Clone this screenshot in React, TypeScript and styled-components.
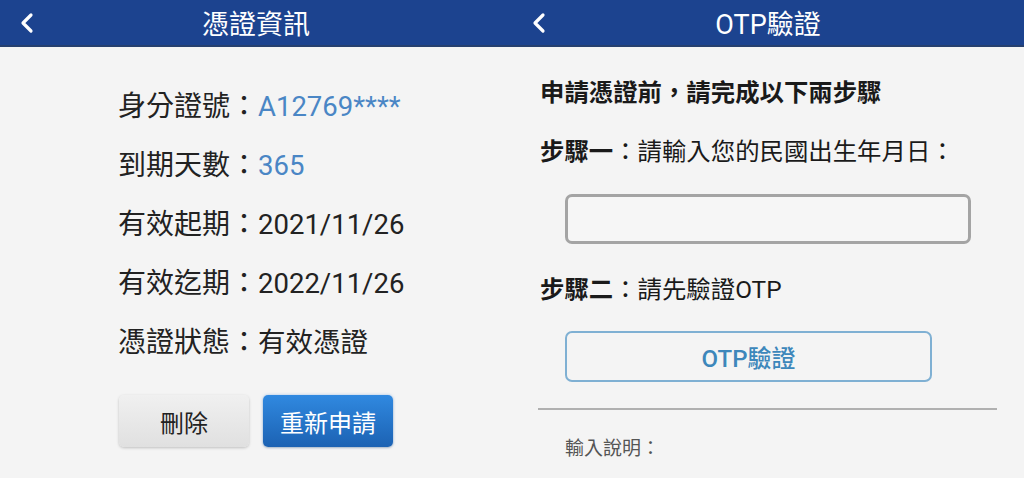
import React from "react";
import styled, { createGlobalStyle } from "styled-components";

const Global = createGlobalStyle`
  html, body { margin: 0; padding: 0; background: #f4f4f4; }
  body { font-family: Roboto, "Noto Sans CJK TC", sans-serif; }
`;

const Page = styled.div`
  display: flex;
  width: 1024px;
  height: 478px;
  overflow: hidden;
  background: #f4f4f4;
`;

const Panel = styled.div`
  width: 512px;
  display: flex;
  flex-direction: column;
`;

const Header = styled.div`
  height: 47px;
  box-sizing: border-box;
  background: #1c438f;
  border-bottom: 2px solid #26406f;
  display: flex;
  align-items: center;
  justify-content: center;
  position: relative;
  color: #fff;
  font-size: 27px;
  font-family: Roboto, "Noto Sans CJK TC", sans-serif;
`;

const Back = styled.svg`
  position: absolute;
  left: 18px;
  top: 11px;
`;

const InfoBody = styled.div`
  padding: 30px 0 0 118px;
  display: flex;
  flex-direction: column;
`;

const InfoRow = styled.div`
  height: 59px;
  line-height: 59px;
  font-size: 28px;
  color: #222;
  white-space: nowrap;
`;

const Value = styled.span<{ $blue?: boolean }>`
  color: ${(p) => (p.$blue ? "#4a86c5" : "#222")};
  font-size: 27.5px;
`;

const Buttons = styled.div`
  display: flex;
  gap: 14px;
  margin-top: 23px;
  margin-left: 1px;
`;

const Btn = styled.button<{ $primary?: boolean }>`
  width: 130px;
  height: 52px;
  border: none;
  border-radius: 5px;
  font-size: 24px;
  font-family: Roboto, "Noto Sans CJK TC", sans-serif;
  padding: 0;
  color: ${(p) => (p.$primary ? "#fff" : "#222")};
  background: ${(p) =>
    p.$primary
      ? "linear-gradient(#3089e0, #1c62b3)"
      : "linear-gradient(#f0f0f0, #e0e0e0)"};
  box-shadow: ${(p) =>
    p.$primary
      ? "0 0 3px rgba(80,150,230,0.5), 0 1px 2px rgba(0,0,0,0.2)"
      : "0 1px 3px rgba(0,0,0,0.22)"};
`;

const OtpBody = styled.div`
  padding: 26px 0 0 28px;
  display: flex;
  flex-direction: column;
`;

const Line = styled.div<{ $top: number; $bold?: boolean }>`
  margin-top: ${(p) => p.$top}px;
  height: 40px;
  line-height: 40px;
  font-size: 24.4px;
  color: #1a1a1a;
  font-weight: ${(p) => (p.$bold ? 700 : 400)};
  white-space: nowrap;
`;

const Strong = styled.b`
  font-weight: 700;
`;

const Input = styled.div`
  margin: 22px 0 0 25px;
  width: 406px;
  height: 50px;
  box-sizing: border-box;
  border: 3px solid #a4a4a4;
  border-radius: 7px;
  background: #f6f6f6;
`;

const OtpButton = styled.div`
  margin: 21px 0 0 25px;
  width: 367px;
  height: 51px;
  box-sizing: border-box;
  border: 2px solid #7fb0d3;
  border-radius: 7px;
  display: flex;
  align-items: center;
  justify-content: center;
  font-size: 24px;
  font-weight: 500;
  color: #3d87bb;
`;

const Divider = styled.div`
  margin: 26px 0 0 -2px;
  width: 459px;
  height: 2px;
  background: #b0b0b0;
`;

const Note = styled.div`
  margin: 24px 0 0 25px;
  height: 30px;
  line-height: 30px;
  font-size: 19px;
  color: #555;
`;

const Chevron = () => (
  <Back width="18" height="24" viewBox="0 0 18 24">
    <polyline
      points="13,4 5,12 13,20"
      fill="none"
      stroke="#fff"
      strokeWidth="3.2"
      strokeLinecap="round"
      strokeLinejoin="round"
    />
  </Back>
);

export default function App() {
  return (
    <>
      <Global />
      <Page>
        <Panel>
          <Header>
            <Chevron />
            憑證資訊
          </Header>
          <InfoBody>
            <InfoRow>
              身分證號：<Value $blue>A12769****</Value>
            </InfoRow>
            <InfoRow>
              到期天數：<Value $blue>365</Value>
            </InfoRow>
            <InfoRow>
              有效起期：<Value>2021/11/26</Value>
            </InfoRow>
            <InfoRow>
              有效迄期：<Value>2022/11/26</Value>
            </InfoRow>
            <InfoRow>
              憑證狀態：<Value>有效憑證</Value>
            </InfoRow>
            <Buttons>
              <Btn>刪除</Btn>
              <Btn $primary>重新申請</Btn>
            </Buttons>
          </InfoBody>
        </Panel>
        <Panel>
          <Header>
            <Chevron />
            OTP驗證
          </Header>
          <OtpBody>
            <Line $top={0} $bold>
              申請憑證前，請完成以下兩步驟
            </Line>
            <Line $top={19}>
              <Strong>步驟一</Strong>：請輸入您的民國出生年月日：
            </Line>
            <Input />
            <Line $top={26}>
              <Strong>步驟二</Strong>：請先驗證OTP
            </Line>
            <OtpButton>OTP驗證</OtpButton>
            <Divider />
            <Note>輸入說明：</Note>
          </OtpBody>
        </Panel>
      </Page>
    </>
  );
}
